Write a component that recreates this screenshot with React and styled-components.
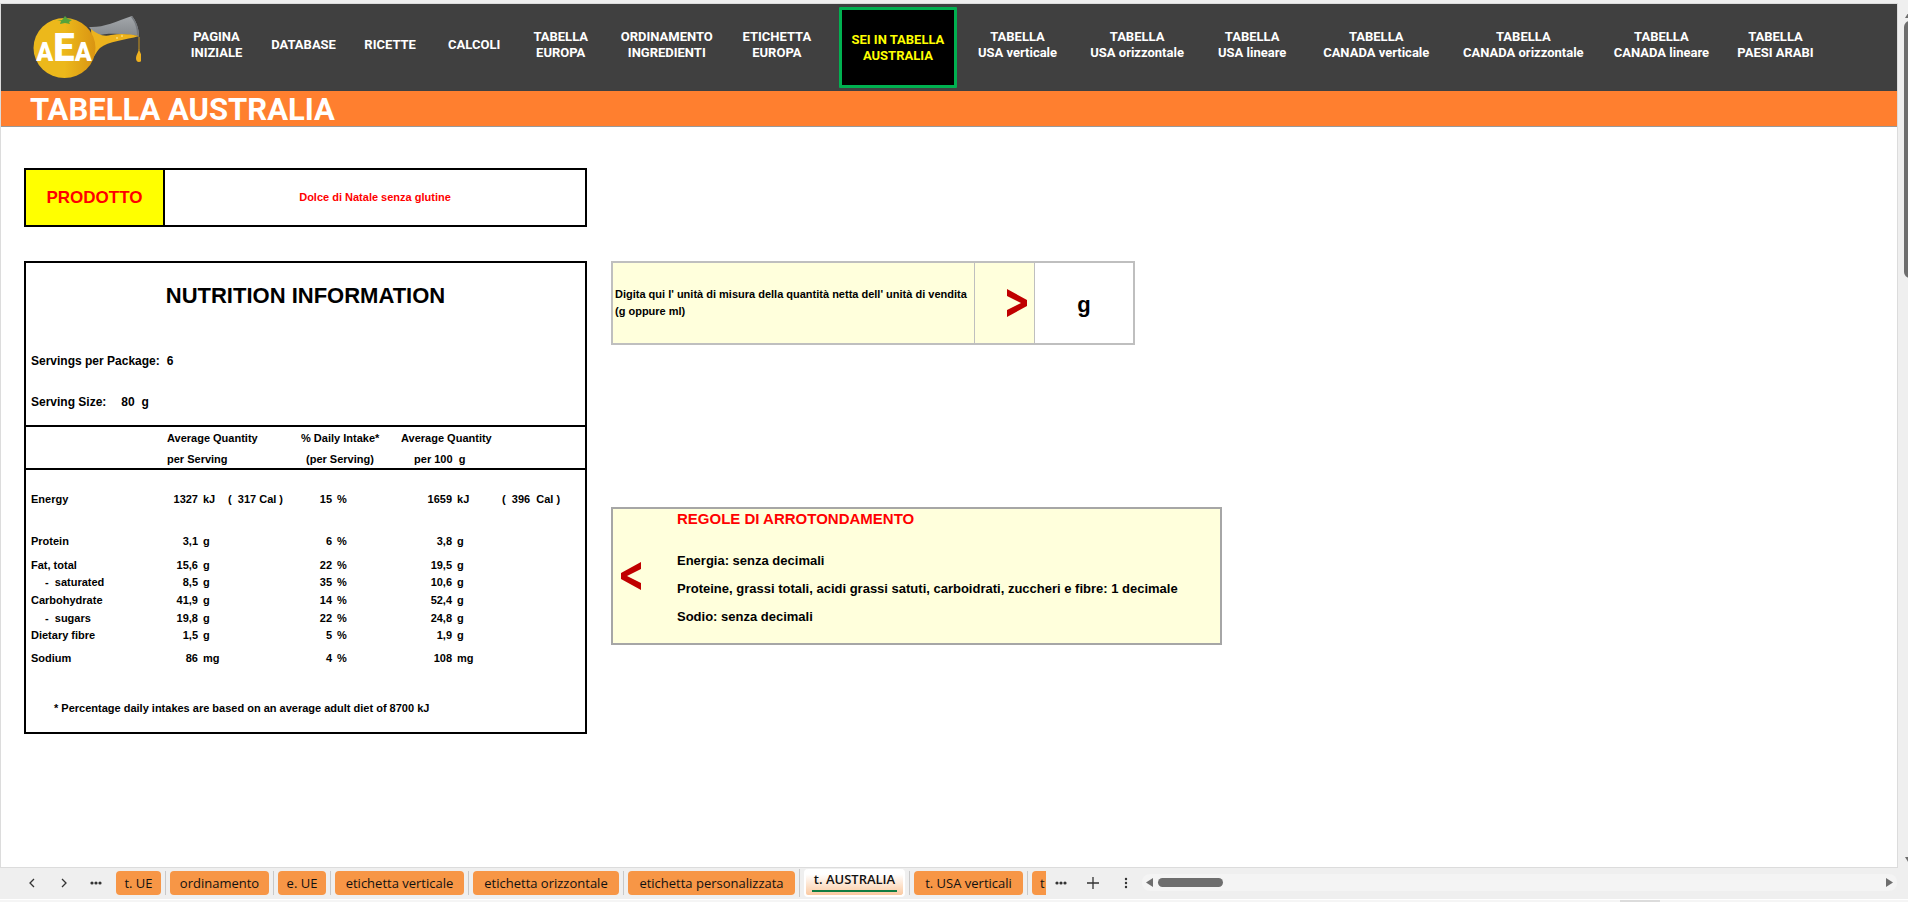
import React from 'react';
import styled, { createGlobalStyle } from 'styled-components';

const sans = `'Liberation Sans', Arial, sans-serif`;

const GlobalStyle = createGlobalStyle`
	* { box-sizing: border-box; }
	body {
		margin: 0;
		background: #efefef;
		color: #000;
		font-family: ${sans};
		font-weight: bold;
	}
	h1, h2, p { margin: 0; }
`;

const Page = styled.div`
	display: flex;
	flex-direction: column;
	min-height: 100vh;
	padding-top: 3px;
`;

const Workspace = styled.div`
	flex: 1;
	display: flex;
	overflow: hidden;
`;

const Sheet = styled.main`
	flex: 1;
	min-width: 0;
	background: #fff;
	border: 1px solid #dcdcdc;
`;

const Header = styled.header`
	display: flex;
	height: 87px;
	padding-right: 79px;
	background: #404040;
`;

const Logo = styled.svg`
	flex: none;
	width: 140px;
	height: 87px;
	margin-right: 32px;
`;

const Nav = styled.nav`
	flex: 1;
	display: grid;
	grid-template-columns: 87fr 87fr 86fr 82fr 91fr 121fr 99fr 143fr 96fr 143fr 87fr 161fr 133fr 143fr 85fr;
	padding: 3px 0;
`;

const NavLink = styled.a`
	display: flex;
	flex-direction: column;
	align-items: center;
	justify-content: center;
	justify-self: center;
	padding-bottom: 5px;
	color: #fff;
	font: bold 13px/16px Roboto, sans-serif;
	text-decoration: none;
	white-space: nowrap;
`;

const ActiveLink = styled(NavLink)`
	padding: 0 10px;
	background: #000;
	border: 3px solid #00b050;
	border-radius: 1px;
	color: #ff0;
`;

const Title = styled.h1`
	height: 36px;
	padding-left: 29px;
	background: #ff7f2f;
	border-bottom: 1px solid #999;
	color: #fff;
	font: bold 31px/37px Roboto, sans-serif;
`;

const Content = styled.div`
	display: grid;
	grid-template-columns: 563px minmax(0, 1fr);
	column-gap: 24px;
	row-gap: 34px;
	padding: 41px 23px;
`;

const Product = styled.section`
	display: grid;
	grid-template-columns: 139px 1fr;
	height: 59px;
	border: 2px solid #000;
	color: #f00;
	text-align: center;
`;

const ProductLabel = styled.h2`
	background: #ff0;
	border-right: 2px solid #000;
	font-size: 17px;
	line-height: 55px;
`;

const ProductName = styled.p`
	font-size: 11px;
	line-height: 55px;
`;

const Facts = styled.section`
	grid-column: 1;
	border: 2px solid #000;
	padding-bottom: 16px;
`;

const FactsTitle = styled.h2`
	padding-top: 18px;
	font-size: 22px;
	line-height: 30px;
	text-align: center;
`;

const Servings = styled.div`
	display: grid;
	row-gap: 21px;
	padding: 40px 5px 13px;
	font-size: 12px;
	line-height: 20px;
	white-space: pre;
`;

const Serving = styled.p`
	display: flex;
	gap: ${props => props.$gap}px;
`;

const Table = styled.table`
	width: 100%;
	table-layout: fixed;
	border-collapse: separate;
	border-spacing: 0;
	font-size: 11px;
	line-height: 12px;

	th, td { padding: 0; white-space: pre; }
	thead { text-align: left; }
	thead tr:first-child th { height: 24px; border-top: 2px solid #000; }
	thead tr:last-child th { height: 21px; border-bottom: 2px solid #000; }
`;

const GroupHead = styled.th`
	padding-left: ${props => props.$indent || 0}px !important;
`;

const Row = styled.tr`
	height: ${props => props.$height}px;
`;

const Nutrient = styled.th`
	padding-left: ${props => (props.$sub ? 19 : 5)}px !important;
	text-align: left;
`;

const Amount = styled.td`
	text-align: right;
`;

const Unit = styled.td`
	padding-left: 5px !important;
`;

const Calories = styled.td`
	padding-left: 2px !important;
`;

const Footnote = styled.p`
	padding: 30px 28px 0;
	font-size: 11px;
	line-height: 16px;
`;

const Notes = styled.div`
	display: flex;
	flex-direction: column;
	gap: 162px;
`;

const UnitBox = styled.section`
	display: grid;
	grid-template-columns: 361px 61px 1fr;
	width: 524px;
	max-width: 100%;
	height: 84px;
	background: #ffffdc;
	border: 2px solid #bfbfbf;
`;

const UnitLabel = styled.label`
	align-self: center;
	padding-left: 2px;
	font-size: 11px;
	line-height: 17px;
	white-space: nowrap;
`;

const Arrow = styled.div`
	display: flex;
	align-items: center;
	justify-content: flex-end;
	padding-right: 6px;
	border: solid #bfbfbf;
	border-width: 0 1px;
`;

const UnitInput = styled.input`
	min-width: 0;
	width: 100%;
	height: 100%;
	padding: 4px 0 0;
	background: #fff;
	border: 0;
	outline: 0;
	font: bold 22px ${sans};
	text-align: center;
`;

const Rules = styled.section`
	display: grid;
	grid-template-columns: 64px 1fr;
	width: 611px;
	max-width: 100%;
	height: 138px;
	background: #ffffdc;
	border: 2px solid #a6a6a6;
`;

const RulesArrow = styled.div`
	align-self: center;
	padding: 4px 0 0 7px;
`;

const RulesTitle = styled.h2`
	padding-bottom: 18px;
	color: #f00;
	font-size: 15px;
	line-height: 20px;
`;

const Rule = styled.p`
	font-size: 13px;
	line-height: 28px;
`;

const Scroller = styled.div`
	flex: none;
	width: 10px;
	padding: 6px 0 0 6px;
	display: flex;
	flex-direction: column;
	background: #efefef;
	overflow: hidden;

	svg { flex: none; width: 12px; }
`;

const ScrollerThumb = styled.div`
	width: 12px;
	height: 257px;
	margin-bottom: auto;
	background: #6e6e6e;
	border-radius: 6px;
`;

const TabBar = styled.footer`
	display: flex;
	align-items: center;
	height: 31px;
	padding: 0 11px 2px 16px;
	background: #efefef;
`;

const IconButton = styled.button`
	flex: none;
	display: flex;
	justify-content: center;
	width: ${props => props.$width || 32}px;
	padding: 0;
	background: none;
	border: 0;
	color: #333;
`;

const Tabs = styled.div`
	flex: none;
	display: flex;
	align-items: center;
	width: 934px;
	height: 31px;
	overflow: hidden;
`;

const TabSlot = styled.div`
	flex: none;
	width: ${props => props.$width}px;
	padding: 0 4px;
	border-left: ${props => (props.$first ? 0 : 1)}px solid #c8c8c8;
`;

const Tab = styled.button`
	display: block;
	width: 100%;
	height: 24px;
	padding: 0 8px;
	background: #f79646;
	border: 0;
	border-radius: 4px;
	color: #111;
	font: 13px/24px 'Open Sans', sans-serif;
	text-align: ${props => props.$align || 'center'};
	white-space: nowrap;
`;

const ActiveTab = styled(Tab)`
	height: 28px;
	padding: 0 6px 3px;
	background: linear-gradient(#fff 20%, #fbc9a0);
	border: 2px solid #fff;
	border-top: 0;
	font-weight: 600;

	span {
		display: block;
		line-height: 21px;
		border-bottom: 2px solid #107c41;
	}
`;

const Track = styled.div`
	flex: 1;
	display: flex;
	align-items: center;
	height: 17px;
	padding: 0 4px;
	gap: 5px;
	background: #f4f4f4;
	border-radius: 8px;
`;

const Thumb = styled.div`
	width: 65px;
	height: 9px;
	margin-right: auto;
	background: #6e6e6e;
	border-radius: 5px;
`;

const StatusBar = styled.div`
	display: flex;
	justify-content: flex-end;
	height: 3px;
	padding-right: 248px;
	background: #f5f5f5;
	border-top: 1px solid #fff;
`;

const StatusItem = styled.div`
	width: 40px;
	background: #dcdcdc;
`;

const links = [
	['PAGINA', 'INIZIALE'],
	['DATABASE'],
	['RICETTE'],
	['CALCOLI'],
	['TABELLA', 'EUROPA'],
	['ORDINAMENTO', 'INGREDIENTI'],
	['ETICHETTA', 'EUROPA'],
	['SEI IN TABELLA', 'AUSTRALIA'],
	['TABELLA', 'USA verticale'],
	['TABELLA', 'USA orizzontale'],
	['TABELLA', 'USA lineare'],
	['TABELLA', 'CANADA verticale'],
	['TABELLA', 'CANADA orizzontale'],
	['TABELLA', 'CANADA lineare'],
	['TABELLA', 'PAESI ARABI'],
];

const nutrients = [
	{ name: 'Energy', serving: '1327', unit: 'kJ', cal: '(  317 Cal )', daily: '15', hundred: '1659', cal100: '(  396  Cal )', height: 58 },
	{ name: 'Protein', serving: '3,1', unit: 'g', daily: '6', hundred: '3,8', height: 26 },
	{ name: 'Fat, total', serving: '15,6', unit: 'g', daily: '22', hundred: '19,5', height: 22 },
	{ name: '-  saturated', sub: true, serving: '8,5', unit: 'g', daily: '35', hundred: '10,6', height: 12 },
	{ name: 'Carbohydrate', serving: '41,9', unit: 'g', daily: '14', hundred: '52,4', height: 24 },
	{ name: '-  sugars', sub: true, serving: '19,8', unit: 'g', daily: '22', hundred: '24,8', height: 12 },
	{ name: 'Dietary fibre', serving: '1,5', unit: 'g', daily: '5', hundred: '1,9', height: 22 },
	{ name: 'Sodium', serving: '86', unit: 'mg', daily: '4', hundred: '108', height: 24 },
];

const columns = [141, 31, 28, 75, 31, 69, 51, 48, 85];

const tabs = [
	['t. UE', 53],
	['ordinamento', 108],
	['e. UE', 57],
	['etichetta verticale', 138],
	['etichetta orizzontale', 155],
	['etichetta personalizzata', 176],
	['t. AUSTRALIA', 110],
	['t. USA verticali', 118],
	['t', 118],
];

const Chevron = ({ left }) => (
	<svg width="22" height="28" viewBox="0 0 22 28" fill="#c00000">
		<path d={left ? 'M21 0v7L7 14l14 7v7L1 17v-6z' : 'M1 0v7l14 7-14 7v7l20-11v-6z'} />
	</svg>
);

const Dots = () => (
	<svg width="12" height="4" viewBox="0 0 12 4" fill="#333">
		<circle cx="2" cy="2" r="1.6" />
		<circle cx="6" cy="2" r="1.6" />
		<circle cx="10" cy="2" r="1.6" />
	</svg>
);

const AeaLogo = () => (
	<Logo viewBox="1 4 140 87" role="img" aria-label="AEA">
		<defs>
			<linearGradient id="orange" x1="0" x2="1">
				<stop offset="0.5" stopColor="#ecb81b" />
				<stop offset="1" stopColor="#d99412" />
			</linearGradient>
			<linearGradient id="glass" x1="0" y1="0" x2="0" y2="1">
				<stop offset="0" stopColor="#a3a7ab" />
				<stop offset="1" stopColor="#85898d" />
			</linearGradient>
		</defs>
		<path d="M89 27c13 1 26-5 43-11 4 5 7 12 7 20-13-2-31-4-43 0z" fill="url(#glass)" />
		<path d="M132 16c4 5 7 12 7 21l-2-1c0-8-2-14-6-19z" fill="#74787d" />
		<path d="M91 29c6 5 12 8 20 6 10-2 19-1 28 1-13 4-31 5-39 12-4 4-5 8-8 11z" fill="#edb31d" />
		<circle cx="117" cy="38" r="1" fill="#f8da79" />
		<circle cx="122" cy="36" r="1" fill="#f8da79" />
		<ellipse cx="64.500" cy="48" rx="31" ry="30" fill="url(#orange)" />
		<path d="M57 21l5-1 3-4 3 3 4 1-3 2 1 2-5-1-5 1 1-3z" fill="#55a33b" />
		<path d="M139 37v13" stroke="#c9951d" strokeWidth="1" />
		<path d="M139 49c1 4 3 6 3 9a3 4 0 0 1-6 0c0-3 2-5 3-9z" fill="#efb11e" />
		<text x="64" y="61" fill="#fff" fontFamily="Roboto, sans-serif" fontWeight="900" textAnchor="middle">
			<tspan fontSize="25">A</tspan>
			<tspan fontSize="38">E</tspan>
			<tspan fontSize="25">A</tspan>
		</text>
	</Logo>
);

const App = () => (
	<Page>
		<GlobalStyle />
		<Workspace>
			<Sheet>
				<Header>
					<AeaLogo />
					<Nav>
						{links.map((lines, i) => {
							const Link = i === 7 ? ActiveLink : NavLink;
							return (
								<Link href="#" key={lines.join(' ')}>
									{lines.map(line => <span key={line}>{line}</span>)}
								</Link>
							);
						})}
					</Nav>
				</Header>
				<Title>TABELLA AUSTRALIA</Title>
				<Content>
					<Product>
						<ProductLabel>PRODOTTO</ProductLabel>
						<ProductName>Dolce di Natale senza glutine</ProductName>
					</Product>
					<Facts>
						<FactsTitle>NUTRITION INFORMATION</FactsTitle>
						<Servings>
							<Serving $gap={7}><span>Servings per Package:</span><span>6</span></Serving>
							<Serving $gap={15}><span>Serving Size:</span><span>80  g</span></Serving>
						</Servings>
						<Table>
							<colgroup>
								{columns.map((width, i) => <col key={i} width={width} />)}
							</colgroup>
							<thead>
								<tr>
									<th />
									<GroupHead colSpan="3">Average Quantity</GroupHead>
									<GroupHead colSpan="2">% Daily Intake*</GroupHead>
									<GroupHead colSpan="3">Average Quantity</GroupHead>
								</tr>
								<tr>
									<th />
									<GroupHead colSpan="3">per Serving</GroupHead>
									<GroupHead colSpan="2" $indent={5}>(per Serving)</GroupHead>
									<GroupHead colSpan="3" $indent={13}>per 100  g</GroupHead>
								</tr>
							</thead>
							<tbody>
								{nutrients.map(n => (
									<Row key={n.name} $height={n.height}>
										<Nutrient scope="row" $sub={n.sub}>{n.name}</Nutrient>
										<Amount>{n.serving}</Amount>
										<Unit>{n.unit}</Unit>
										<Calories>{n.cal}</Calories>
										<Amount>{n.daily}</Amount>
										<Unit>%</Unit>
										<Amount>{n.hundred}</Amount>
										<Unit>{n.unit}</Unit>
										<Calories>{n.cal100}</Calories>
									</Row>
								))}
							</tbody>
						</Table>
						<Footnote>* Percentage daily intakes are based on an average adult diet of 8700 kJ</Footnote>
					</Facts>
					<Notes>
						<UnitBox>
							<UnitLabel htmlFor="unit">
								Digita qui l' unità di misura della quantità netta dell' unità di vendita<br />
								(g oppure ml)
							</UnitLabel>
							<Arrow><Chevron /></Arrow>
							<UnitInput id="unit" defaultValue="g" />
						</UnitBox>
						<Rules>
							<RulesArrow><Chevron left /></RulesArrow>
							<div>
								<RulesTitle>REGOLE DI ARROTONDAMENTO</RulesTitle>
								<Rule>Energia: senza decimali</Rule>
								<Rule>Proteine, grassi totali, acidi grassi satuti, carboidrati, zuccheri e fibre: 1 decimale</Rule>
								<Rule>Sodio: senza decimali</Rule>
							</div>
						</Rules>
					</Notes>
				</Content>
			</Sheet>
			<Scroller>
				<svg height="12" viewBox="0 0 12 12" fill="#6e6e6e"><path d="M6 1l5 8H1z" /></svg>
				<ScrollerThumb />
				<svg height="14" viewBox="0 0 12 14" fill="#6e6e6e"><path d="M6 11L1 3h10z" /></svg>
			</Scroller>
		</Workspace>
		<TabBar>
			<IconButton aria-label="Indietro">
				<svg width="8" height="10" viewBox="0 0 8 10" fill="none" stroke="#333" strokeWidth="1.3"><path d="M6 1L2 5l4 4" /></svg>
			</IconButton>
			<IconButton aria-label="Avanti">
				<svg width="8" height="10" viewBox="0 0 8 10" fill="none" stroke="#333" strokeWidth="1.3"><path d="M2 1l4 4-4 4" /></svg>
			</IconButton>
			<IconButton aria-label="Altri fogli"><Dots /></IconButton>
			<Tabs>
				{tabs.map(([name, width], i) => (
					<TabSlot key={name} $width={width} $first={i === 0}>
						{name === 't. AUSTRALIA'
							? <ActiveTab><span>{name}</span></ActiveTab>
							: <Tab $align={i === tabs.length - 1 ? 'left' : 'center'}>{name}</Tab>}
					</TabSlot>
				))}
			</Tabs>
			<IconButton $width={30} aria-label="Altri fogli"><Dots /></IconButton>
			<IconButton $width={34} aria-label="Nuovo foglio">
				<svg width="12" height="12" viewBox="0 0 12 12" stroke="#333" strokeWidth="1.3"><path d="M6 0v12M0 6h12" /></svg>
			</IconButton>
			<IconButton aria-label="Opzioni">
				<svg width="4" height="12" viewBox="0 0 4 12" fill="#333">
					<circle cx="2" cy="2" r="1.2" />
					<circle cx="2" cy="6" r="1.2" />
					<circle cx="2" cy="10" r="1.2" />
				</svg>
			</IconButton>
			<Track>
				<svg width="7" height="9" viewBox="0 0 7 9" fill="#6e6e6e"><path d="M7 0v9L0 4.500z" /></svg>
				<Thumb />
				<svg width="7" height="9" viewBox="0 0 7 9" fill="#6e6e6e"><path d="M0 0v9l7-4.500z" /></svg>
			</Track>
		</TabBar>
		<StatusBar><StatusItem /></StatusBar>
	</Page>
);

export default App;
